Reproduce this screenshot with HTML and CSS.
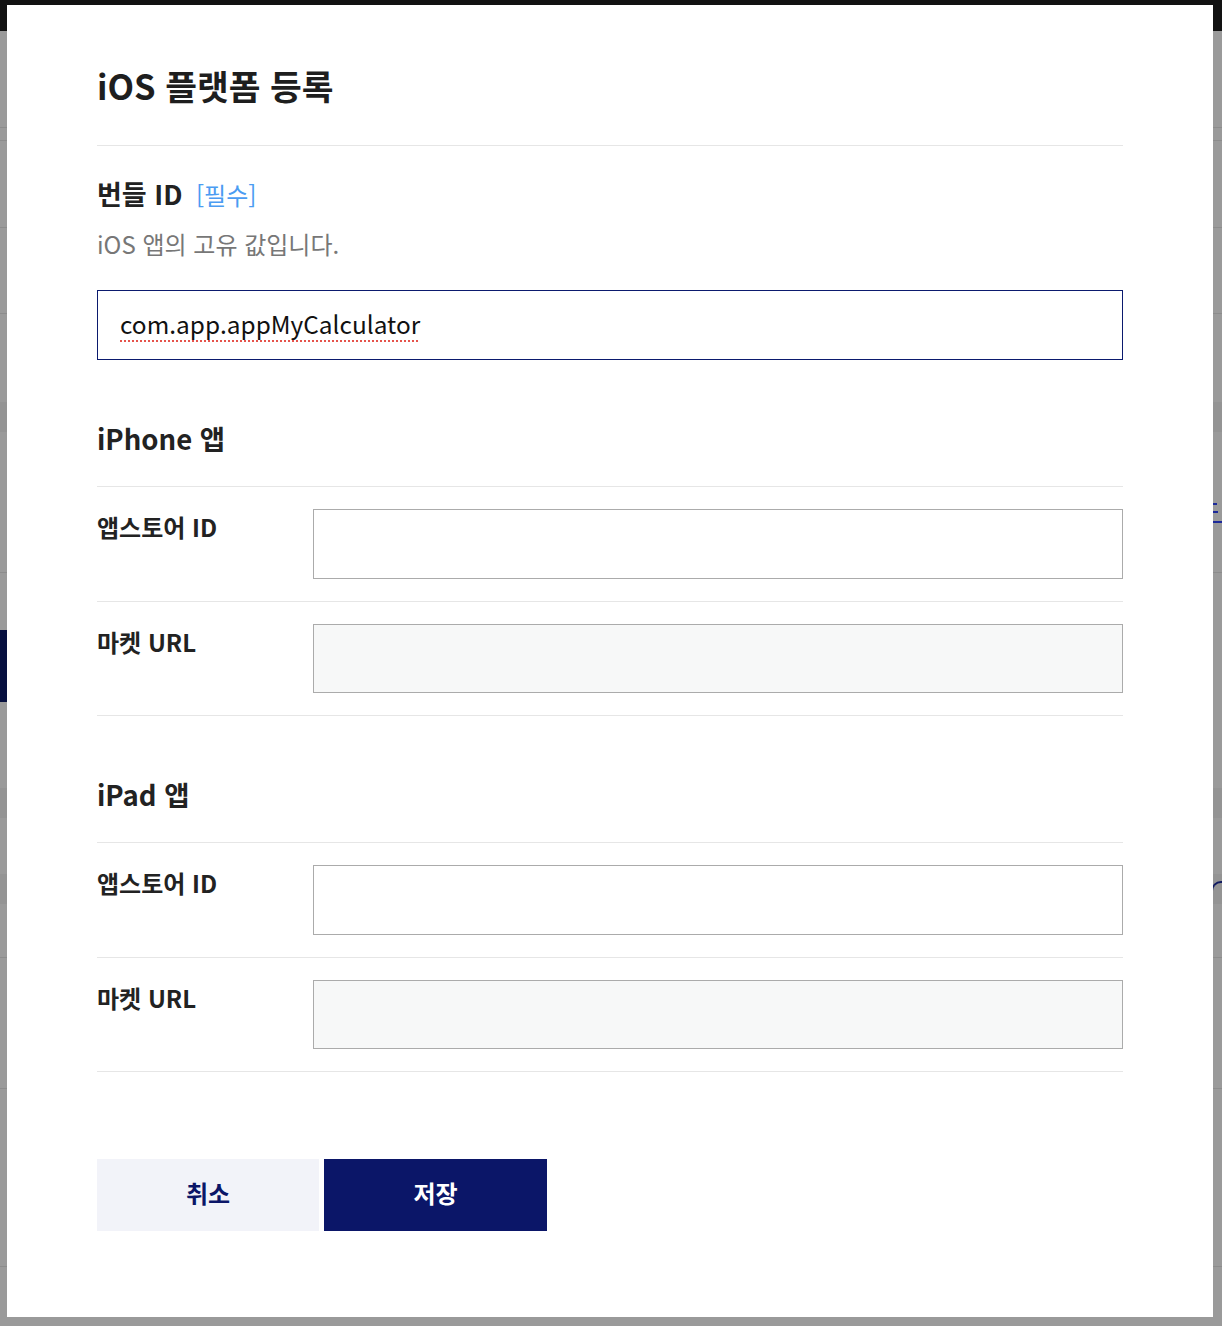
FILE: index.html
```html
<!DOCTYPE html>
<html lang="ko">
<head>
<meta charset="utf-8">
<title>iOS 플랫폼 등록</title>
<link rel="stylesheet" href="styles.css">
</head>
<body>
<div class="backdrop">
  <div class="bg-header"></div>
  <div class="bg-row h96 line"></div>
  <div class="bg-row h12 line"></div>
  <div class="bg-row h86 line"></div>
  <div class="bg-row h85 line"></div>
  <div class="bg-row h88"></div>
  <div class="bg-row h30 shade"></div>
  <div class="bg-row h140 line"><span class="bg-mark mark-a"></span></div>
  <div class="bg-row h57"></div>
  <div class="bg-row h72"><div class="bg-active"></div></div>
  <div class="bg-row h86"></div>
  <div class="bg-row h30 shade"></div>
  <div class="bg-row h56"></div>
  <div class="bg-row h30 shade"><span class="bg-mark mark-b"></span></div>
  <div class="bg-row h53 line"></div>
  <div class="bg-row h130 line"></div>
  <div class="bg-row h177 line"></div>
</div>

<div class="modal">
  <h1 class="modal-title">iOS 플랫폼 등록</h1>

  <div class="field">
    <div class="field-label">번들 ID <span class="required">[필수]</span></div>
    <p class="field-desc">iOS 앱의 고유 값입니다.</p>
    <div class="textbox focused"><span class="spell">com.app.appMyCalculator</span></div>
  </div>

  <h2 class="section-title">iPhone 앱</h2>
  <div class="row">
    <div class="row-label">앱스토어 ID</div>
    <div class="textbox"></div>
  </div>
  <div class="row">
    <div class="row-label">마켓 URL</div>
    <div class="textbox disabled"></div>
  </div>

  <h2 class="section-title">iPad 앱</h2>
  <div class="row">
    <div class="row-label">앱스토어 ID</div>
    <div class="textbox"></div>
  </div>
  <div class="row">
    <div class="row-label">마켓 URL</div>
    <div class="textbox disabled"></div>
  </div>

  <div class="actions">
    <button class="btn btn-cancel">취소</button>
    <button class="btn btn-save">저장</button>
  </div>
</div>
</body>
</html>
```

FILE: styles.css
```css
html, body {
  margin: 0;
  padding: 0;
}
body {
  background: #9a9a9a;
  font-family: "Noto Sans CJK KR", "Noto Sans", sans-serif;
  color: #222;
  min-height: 1326px;
  position: relative;
}

/* dimmed page behind the dialog */
.backdrop {
  display: flex;
  flex-direction: column;
}
.bg-header {
  height: 31px;
  background: #121212;
}
.bg-row {
  position: relative;
  display: flex;
  justify-content: flex-end;
  align-items: center;
}
.bg-row.line { border-bottom: 1px solid #8c8c8c; }
.bg-row.shade { background: #949494; }
.h12 { height: 12px; }
.h30 { height: 30px; }
.h53 { height: 53px; }
.h56 { height: 56px; }
.h57 { height: 57px; }
.h72 { height: 72px; justify-content: flex-start; }
.h85 { height: 85px; }
.h86 { height: 86px; }
.h88 { height: 88px; }
.h96 { height: 96px; }
.h130 { height: 130px; }
.h140 { height: 140px; }
.h177 { height: 177px; }
.bg-active {
  width: 40px;
  height: 72px;
  background: #07103f;
}
.bg-mark {
  display: block;
  width: 12px;
  margin-right: -3px;
}
.mark-a {
  height: 22px;
  align-self: flex-start;
  margin-top: 67px;
  border-bottom: 2px solid #1d2a9a;
  background: linear-gradient(#1d2a9a, #1d2a9a) 0 4px / 4px 2px no-repeat,
              linear-gradient(#1d2a9a, #1d2a9a) 0 12px / 5px 2px no-repeat;
}
.mark-b {
  height: 14px;
  border-top: 2px solid #101a60;
  border-left: 2px solid #101a60;
  border-top-left-radius: 10px;
}

/* dialog */
.modal {
  position: absolute;
  left: 7px;
  top: 5px;
  width: 1206px;
  height: 1312px;
  box-sizing: border-box;
  background: #fff;
  padding: 60px 90px 86px;
}
.modal-title {
  margin: 0;
  font-size: 34.5px;
  line-height: 40px;
  font-weight: 700;
  color: #1e1e1e;
  padding-bottom: 40px;
  border-bottom: 1px solid #e6e6e6;
}

.field {
  margin-top: 30px;
}
.field-label {
  font-size: 27px;
  line-height: 36px;
  font-weight: 700;
  color: #222;
}
.required {
  font-size: 24px;
  font-weight: 400;
  color: #4b9cf2;
  margin-left: 6px;
}
.field-desc {
  margin: 15px 0 0;
  font-size: 24px;
  line-height: 32px;
  color: #777;
}

.textbox {
  box-sizing: border-box;
  height: 70px;
  border: 1px solid #ababab;
  background: #fff;
  display: flex;
  align-items: center;
  padding: 0 22px 3px;
  font-size: 24.4px;
  color: #111;
}
.field .textbox {
  margin-top: 30px;
}
.textbox.focused {
  border-color: #0b1a6e;
}
.textbox.disabled {
  background: #f7f8f8;
}
.spell {
  text-decoration: underline dotted #e5534b;
  text-decoration-thickness: 2px;
  text-underline-offset: 6px;
}

.section-title {
  margin: 60px 0 0;
  font-size: 27.5px;
  line-height: 36px;
  font-weight: 700;
  color: #222;
  padding-bottom: 30px;
  border-bottom: 1px solid #e6e6e6;
}

.row {
  display: grid;
  grid-template-columns: 216px 1fr;
  align-items: start;
  padding: 22px 0;
  border-bottom: 1px solid #e6e6e6;
}
.row .textbox {
  height: 69.5px;
}
.row-label {
  font-size: 24px;
  line-height: 36px;
  font-weight: 700;
  color: #222;
}

.actions {
  display: flex;
  gap: 5px;
  margin-top: 87px;
}
.btn {
  width: 222px;
  height: 72px;
  border: 0;
  padding: 0 0 5px;
  font-family: inherit;
  font-size: 24px;
  font-weight: 700;
  cursor: pointer;
}
.btn-cancel {
  background: #f2f3f9;
  color: #0b1668;
}
.btn-save {
  width: 223px;
  background: #0b1668;
  color: #fff;
}
```
